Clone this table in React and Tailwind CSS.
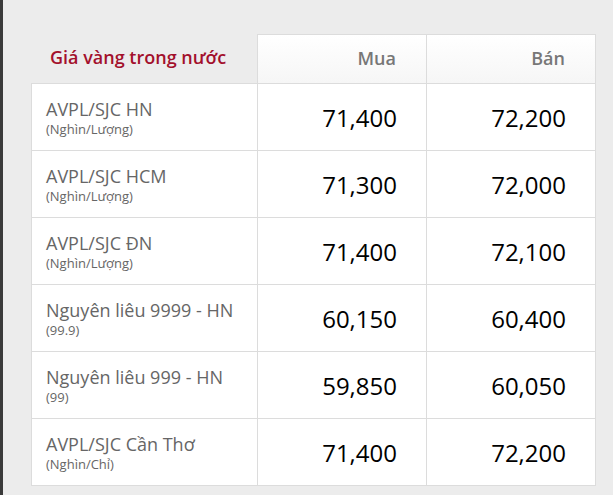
import React from "react";

const rows = [
  { name: "AVPL/SJC HN", unit: "(Nghìn/Lượng)", buy: "71,400", sell: "72,200" },
  { name: "AVPL/SJC HCM", unit: "(Nghìn/Lượng)", buy: "71,300", sell: "72,000" },
  { name: "AVPL/SJC ĐN", unit: "(Nghìn/Lượng)", buy: "71,400", sell: "72,100" },
  { name: "Nguyên liêu 9999 - HN", unit: "(99.9)", buy: "60,150", sell: "60,400" },
  { name: "Nguyên liêu 999 - HN", unit: "(99)", buy: "59,850", sell: "60,050" },
  { name: "AVPL/SJC Cần Thơ", unit: "(Nghìn/Chỉ)", buy: "71,400", sell: "72,200" },
];

export default function App() {
  return (
    <div
      className="w-[613px] h-[495px] bg-[#ececec] border-l-[3px] border-[#3a3a3a] overflow-hidden"
      style={{ fontFamily: '"Open Sans", "Noto Sans", sans-serif' }}
    >
      <div className="ml-[28px] pt-[34px] w-[565px]">
        <div className="flex h-[50px]">
          <div className="w-[226px] border-b border-[#dcdcdc] flex items-center pl-[19px] pb-[2px]">
            <span className="text-[18px] font-semibold text-[#a3102c]">Giá vàng trong nước</span>
          </div>
          <div className="w-[169px] border-l border-t border-b border-[#dcdcdc] bg-gradient-to-b from-white to-[#f6f6f6] flex items-center justify-end pr-[30px] pb-[2px]">
            <span className="text-[18px] font-semibold text-[#777]">Mua</span>
          </div>
          <div className="w-[170px] border-l border-t border-r border-b border-[#dcdcdc] bg-gradient-to-b from-white to-[#f6f6f6] flex items-center justify-end pr-[30px] pb-[2px]">
            <span className="text-[18px] font-semibold text-[#777]">Bán</span>
          </div>
        </div>
        {rows.map((r, i) => (
          <div key={i} className="flex h-[67px] bg-white">
            <div className="w-[226px] border-l border-b border-[#dcdcdc] flex flex-col justify-center pl-[14px]">
              <span className="text-[18px] leading-[24px] text-[#666]">{r.name}</span>
              <span className="text-[13px] leading-[17px] text-[#666]">{r.unit}</span>
            </div>
            <div className="w-[169px] border-l border-b border-[#dcdcdc] flex items-center justify-end pr-[29px] pt-[2px]">
              <span className="text-[24px] text-black">{r.buy}</span>
            </div>
            <div className="w-[170px] border-l border-r border-b border-[#dcdcdc] flex items-center justify-end pr-[29px] pt-[2px]">
              <span className="text-[24px] text-black">{r.sell}</span>
            </div>
          </div>
        ))}
      </div>
    </div>
  );
}
